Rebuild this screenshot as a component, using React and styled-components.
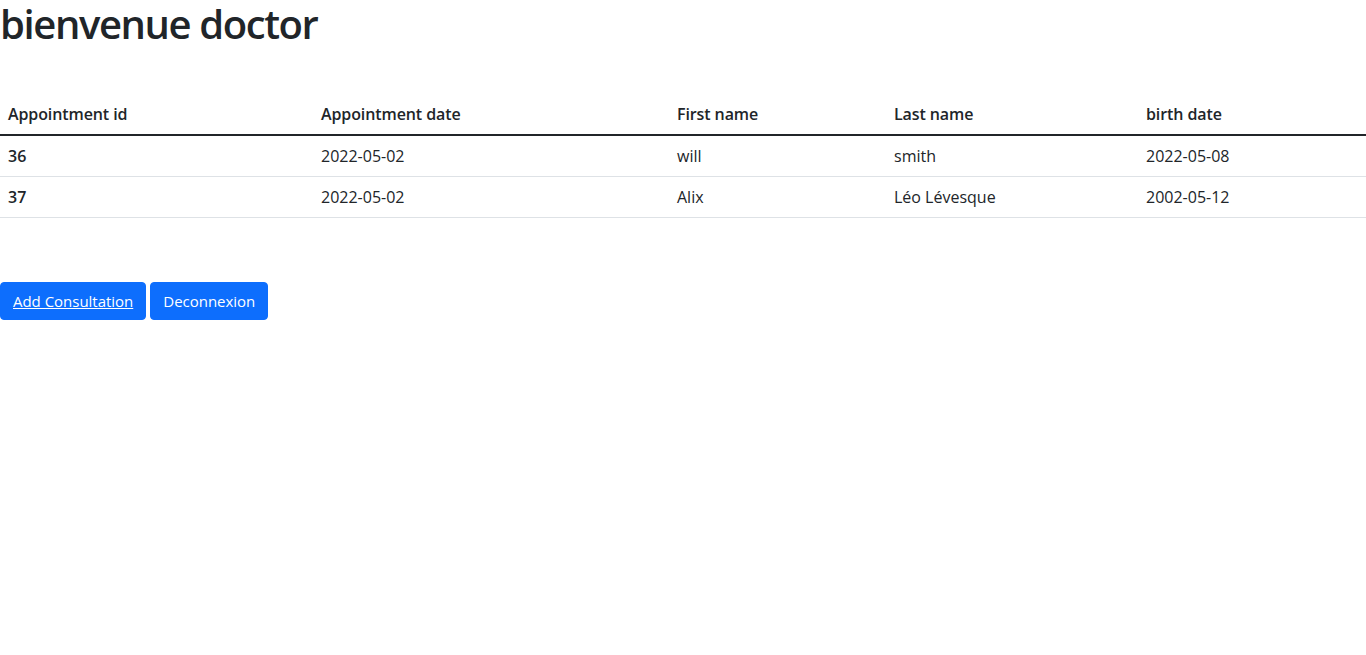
import React from "react";
import styled, { createGlobalStyle } from "styled-components";

const GlobalStyle = createGlobalStyle`
  html, body { margin: 0; padding: 0; background: #fff; }
  body {
    font-family: "Open Sans", "Noto Sans", sans-serif;
    font-size: 16px;
    line-height: 1.5;
    color: #212529;
  }
`;

const Page = styled.div`
  display: flex;
  flex-direction: column;
`;

const Title = styled.h1`
  margin: 0 0 46px;
  font-size: 40px;
  font-weight: 600;
  line-height: 48px;
  letter-spacing: -1.4px;
`;

const Table = styled.table`
  width: 100%;
  border-collapse: collapse;
  margin-bottom: 64px;
  table-layout: fixed;
`;

const HeadCell = styled.th`
  text-align: left;
  font-weight: 600;
  font-size: 16px;
  padding: 8px;
  height: 24px;
  line-height: 24px;
  letter-spacing: -0.1px;
  border-bottom: 2px solid #212529;
`;

const Cell = styled.td`
  padding: 8px;
  line-height: 24px;
  font-size: 16px;
  font-weight: ${(p) => (p.$strong ? 600 : 400)};
  border-bottom: 1px solid #dee2e6;
`;

const Actions = styled.div`
  display: flex;
  gap: 4px;
`;

const Button = styled.button`
  background: #0d6efd;
  color: #fff;
  border: 1px solid #0d6efd;
  border-radius: 4px;
  padding: 6px 12px;
  font-family: inherit;
  font-size: 15px;
  line-height: 24px;
  letter-spacing: -0.02px;
  cursor: pointer;
`;

const ButtonLink = styled.a`
  color: #fff;
  text-decoration: underline;
`;

const columns = [
  { label: "Appointment id", width: 313 },
  { label: "Appointment date", width: 356 },
  { label: "First name", width: 217 },
  { label: "Last name", width: 252 },
  { label: "birth date", width: 228 },
];

const rows = [
  ["36", "2022-05-02", "will", "smith", "2022-05-08"],
  ["37", "2022-05-02", "Alix", "Léo Lévesque", "2002-05-12"],
];

export default function App() {
  return (
    <Page>
      <GlobalStyle />
      <Title>bienvenue doctor</Title>
      <Table>
        <colgroup>
          {columns.map((c) => (
            <col key={c.label} style={{ width: c.width }} />
          ))}
        </colgroup>
        <thead>
          <tr>
            {columns.map((c) => (
              <HeadCell key={c.label}>{c.label}</HeadCell>
            ))}
          </tr>
        </thead>
        <tbody>
          {rows.map((r) => (
            <tr key={r[0]}>
              {r.map((v, i) => (
                <Cell key={i} $strong={i === 0}>
                  {v}
                </Cell>
              ))}
            </tr>
          ))}
        </tbody>
      </Table>
      <Actions>
        <Button>
          <ButtonLink href="#">Add Consultation</ButtonLink>
        </Button>
        <Button>Deconnexion</Button>
      </Actions>
    </Page>
  );
}
